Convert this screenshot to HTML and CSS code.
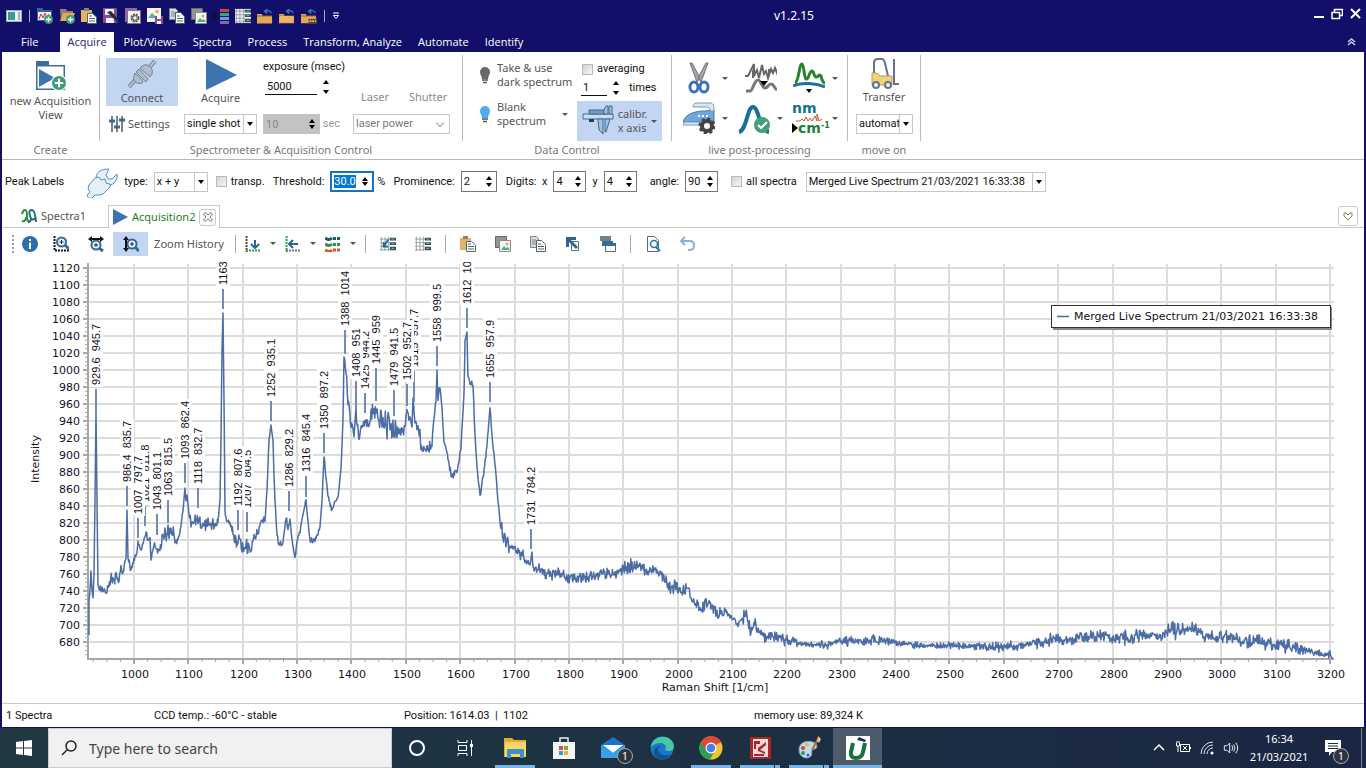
FILE: index.html
```html
<!DOCTYPE html>
<html lang="en">
<head>
  <meta charset="UTF-8" />
  <meta name="viewport" content="width=device-width, initial-scale=1" />
  <title>v1.2.15</title>
  <link rel="stylesheet" href="styles.css">
</head>
<body>

<!-- Shared icons -->
<svg class="defs" aria-hidden="true">
  <symbol id="i-plus" viewBox="0 0 10 10"><circle cx="5" cy="5" r="5" fill="#3f9a78"/><path d="M5 2v6M2 5h6" stroke="#fff" stroke-width="1.500"/></symbol>
  <symbol id="i-paste" viewBox="0 0 16 16"><path d="M0 2h11v12H0z" fill="#e3b365"/><path d="M3 0h5v3H3z" fill="#8a8372"/><path d="M6.500 5.500h5l4 3.500v6.500h-9z" fill="#fff" stroke="#4c6675"/><path d="M8 8h3M8 10.500h6M8 13h6" stroke="#4c6675"/></symbol>
  <symbol id="i-copy" viewBox="0 0 16 16"><path d="M.5.500h6l2 2v9h-8z" fill="#d8dcdf" stroke="#7b868c"/><path d="M2 4h4M2 6h4M2 8h4" stroke="#7b868c"/><path d="M6.500 4.500h5l4 4v7h-9z" fill="#fff" stroke="#51626c"/><path d="M8 8h3M8 10.500h6M8 13h6" stroke="#51626c"/></symbol>
  <symbol id="i-images" viewBox="0 0 16 16"><path d="M.5.500h11v11H.5z" fill="#8e9698" stroke="#65696b"/><path d="M4.500 4.500h11v11h-11z" fill="#f6f6f2" stroke="#8a8a86"/><path d="M6 14l3-4 2 2 2-1 2 3z" fill="#4fae90"/><circle cx="12" cy="8" r="1.500" fill="#eaa35f"/></symbol>
  <symbol id="i-gridset" viewBox="0 0 18 16"><path d="M0 2.500h11M0 6.500h11M0 10.500h11M0 14.500h11M1.500 0v16M5.500 0v16M9.500 0v16" stroke="#9b9b9b"/><path d="M11 1h7v3h-7zM11 6h7v3h-7zM11 11h7v4h-7z" fill="#35505c"/><path d="M13 2.500h3M13 7.500h3M13 13h3" stroke="#7fc0c8"/></symbol>
  <symbol id="i-folderback" viewBox="0 0 17 16"><path d="M0 6h5l1 2h10v8H0z" fill="#e7a856"/><path d="M0 8h16" stroke="#8d6a40"/><path d="M15 5c0-3-4-3-6-2M11 .5L8 3l3 2.500" fill="none" stroke="#3c74ac" stroke-width="1.500"/></symbol>
  <symbol id="i-tri" viewBox="0 0 16 16"><path d="M1 0l15 8L1 16z" fill="#3d74b0"/></symbol>
</svg>

<div class="window">
  <header class="titlebar">
    <div class="quick">
      <button aria-label="Application"><svg viewBox="0 0 16 16"><path d="M.5 2.500h15v11H.5z" fill="#dcebf0" stroke="#9fb6c2"/><path d="M2 4h7v8H2z" fill="#3c9a95"/><path d="M9 4h2v8H9z" fill="#fff"/><path d="M12 4h2v8h-2z" fill="#9eb8cc"/></svg></button>
      <span class="vline"></span>
      <button aria-label="New spectra view"><svg viewBox="0 0 16 16"><path d="M0 0h6v2h9v11H0z" fill="#2c6690"/><path d="M1 4h13v8H1z" fill="#eef"/><path d="M2 11l2-5 2 4 2-5 2 5 2-4" fill="none" stroke="#c33"/><use href="#i-plus" x="7" y="7" width="9" height="9"/></svg></button>
      <button aria-label="Open"><svg viewBox="0 0 16 16"><path d="M1 1h6l1 2h6v3H4l-2 8z" fill="#8c8375"/><path d="M4 5h12l-3 8H1z" fill="#e6a951"/><use href="#i-plus" x="7" y="7" width="9" height="9"/></svg></button>
      <button aria-label="Paste"><svg><use href="#i-paste"/></svg></button>
      <button aria-label="Edit"><svg viewBox="0 0 16 16"><path d="M0 0h13l1 1v14H0z" fill="#80508f"/><path d="M2 1h9v6H2zM3 10h8v5H3z" fill="#f5eff7"/><path d="M4 4l9 9 3 3-1-5-7-8z" fill="#222c42"/></svg></button>
      <button aria-label="Save settings"><svg viewBox="0 0 16 16"><path d="M0 0h12v14H0z" fill="#9069a5"/><path d="M2.500 2.500h13v13h-13z" fill="#f7f3e8" stroke="#8b6c9c"/><circle cx="10" cy="10" r="3.500" fill="none" stroke="#555" stroke-width="2" stroke-dasharray="2 .8"/><circle cx="10" cy="10" r="2.300" fill="none" stroke="#555"/></svg></button>
      <button aria-label="Save image"><svg viewBox="0 0 16 16"><path d="M0 0h14v14H0z" fill="#f4f3ee"/><path d="M1 10l4-5 5 5z" fill="#62af9b"/><circle cx="10" cy="3.500" r="1.800" fill="#eca75b"/><path d="M8 8h8v8H8z" fill="#805090"/><path d="M10 8h4v3h-4zM10 13h4v3h-4z" fill="#fff"/></svg></button>
      <button aria-label="Copy"><svg><use href="#i-copy"/></svg></button>
      <button aria-label="Copy image"><svg><use href="#i-images"/></svg></button>
      <button aria-label="Palette"><svg viewBox="0 0 16 16"><path d="M0 4l5 4-5 4z" fill="#111"/><path d="M7 1h9v3H7z" fill="#c6453b"/><path d="M7 5h9v3H7z" fill="#35a77e"/><path d="M7 9h9v3H7z" fill="#58a8d4"/><path d="M7 13h9v3H7z" fill="#9160a8"/></svg></button>
      <button aria-label="Data grid"><svg viewBox="0 0 18 16"><path d="M0 0h18v16H0z" fill="#edf1f2"/><use href="#i-gridset"/></svg></button>
      <button aria-label="Open previous"><svg><use href="#i-folderback"/></svg></button>
      <button aria-label="Open folder"><svg viewBox="0 0 17 16"><use href="#i-folderback"/><path d="M1 8h14v6H1z" fill="#f0b562"/></svg></button>
      <button aria-label="Open next"><svg viewBox="0 0 17 16"><use href="#i-folderback"/><path d="M8 11h9v5H8z" fill="#5a4a37"/><path d="M9 13.500h7" stroke="#f4bd6c" stroke-width="2" stroke-dasharray="2 1"/></svg></button>
      <span class="vline"></span>
      <button class="more" aria-label="Customize"><svg viewBox="0 0 8 8"><path d="M1 1h6M1.500 3.500h5L4 6.500z" fill="none" stroke="#fff"/></svg></button>
    </div>
    <div class="title">v1.2.15</div>
    <div class="winbtns">
      <button aria-label="Minimize"><svg viewBox="0 0 12 12"><path d="M1 9h10" stroke="#fff" stroke-width="2"/></svg></button>
      <button aria-label="Restore"><svg viewBox="0 0 12 12"><path d="M3.500 4V1.500h8v6H9M1 4.500h7.500v6H1z" fill="none" stroke="#fff" stroke-width="1.500"/></svg></button>
      <button aria-label="Close"><svg viewBox="0 0 12 12"><path d="M2 1l9 9M11 1l-9 9" stroke="#fff" stroke-width="2"/></svg></button>
    </div>
  </header>

  <nav class="menu">
    <a href="#file" class="file">File</a>
    <a href="#acquire" class="active">Acquire</a>
    <a href="#plot">Plot/Views</a>
    <a href="#spectra">Spectra</a>
    <a href="#process">Process</a>
    <a href="#transform">Transform, Analyze</a>
    <a href="#automate">Automate</a>
    <a href="#identify">Identify</a>
    <button class="collapse" aria-label="Collapse ribbon"><svg viewBox="0 0 9 8"><path d="M1 4l3.500-3L8 4M1 7l3.500-3L8 7" fill="none" stroke="#c9c9d8" stroke-width="1.500"/></svg></button>
  </nav>

  <section class="ribbon">
    <div class="group create">
      <button class="big">
        <svg class="ico32" viewBox="0 0 32 32"><path d="M1 1h13v4h16v25H1z" fill="#3c6c9c"/><path d="M2.500 6.500h26v22h-26z" fill="#fff"/><path d="M4 9l16 9-16 9z" fill="#3d74b0"/><circle cx="24" cy="23" r="8" fill="#fff"/><use href="#i-plus" x="17" y="16" width="14" height="14"/></svg>
        <span>new Acquisition<br>View</span>
      </button>
      <h2>Create</h2>
    </div>

    <div class="group spectrometer">
      <div class="acq-grid">
        <button class="big on">
          <svg class="ico32" viewBox="0 0 32 32"><path d="M3 28l6-7M22 10l7-8" stroke="#727f8c" stroke-width="4"/><path d="M3 28l6-7M22 10l7-8" stroke="#b4c3d1" stroke-width="2"/><g fill="#afbecc" stroke="#727f8c"><path d="M8 17c-2 4 3 9 8 7l1-2-8-8z"/><path d="M10 13l10 10 2-3-9-10z"/><path d="M14 9l10 9 2-3c2-5-3-10-8-9z"/></g></svg>
          <span>Connect</span>
        </button>
        <button class="big">
          <svg class="ico32" viewBox="0 0 32 32"><path d="M1 0l31 16-31 15z" fill="#3d74b0"/></svg>
          <span>Acquire</span>
        </button>
        <div class="exposure">
          <label for="exposure">exposure (msec)</label>
          <span class="spin line"><input id="exposure" type="number" value="5000"><i></i></span>
        </div>
        <div class="laser"><span>Laser</span><span>Shutter</span></div>
        <button class="small">
          <svg class="ico16" viewBox="0 0 16 16"><path d="M3 0v16M8 0v16M13 0v16" stroke="#555" stroke-width="1.500"/><path d="M0 5h6M5 11h6M10 4h6" stroke="#376c98" stroke-width="3"/></svg>
          <span>Settings</span>
        </button>
        <span class="drop"><select aria-label="Mode"><option>single shot</option></select></span>
        <div class="secs"><span class="spin disabled"><input id="secs" type="number" value="10" disabled><i></i></span><label for="secs">sec</label></div>
        <span class="drop dim"><select aria-label="Laser power"><option>laser power</option></select></span>
      </div>
      <h2>Spectrometer &amp; Acquisition Control</h2>
    </div>

    <div class="group data">
      <div class="data-cols">
        <div class="bulbs">
          <button class="bulb"><svg viewBox="0 0 12 18"><path d="M6 1a5 5 0 0 1 5 5c0 3-2 4-2 7H3c0-3-2-4-2-7a5 5 0 0 1 5-5z" fill="#686868"/><path d="M3 14h6M4 16.500h4" stroke="#555" stroke-width="1.500"/></svg><span>Take &amp; use<br>dark spectrum</span></button>
          <button class="bulb"><svg viewBox="0 0 12 18"><path d="M6 1a5 5 0 0 1 5 5c0 3-2 4-2 7H3c0-3-2-4-2-7a5 5 0 0 1 5-5z" fill="#54aaf0"/><path d="M3 14h6M4 16.500h4" stroke="#555" stroke-width="1.500"/></svg><span>Blank<br>spectrum</span><i class="arrow"></i></button>
        </div>
        <div class="avg">
          <label class="check"><input type="checkbox"> averaging</label>
          <div class="times"><span class="spin line"><input id="times" type="number" value="1"><i></i></span><label for="times">times</label></div>
          <button class="calibr on">
            <svg viewBox="0 0 32 32"><path d="M1 9h30v5H1z" fill="#c4def6" stroke="#44698f"/><path d="M7 5h17v4H7z" fill="#6e9bca" stroke="#44698f"/><path d="M16 14h5v15l-4-4zM23 14h5l-4 13h-1zM22 5l2-4h2v8h-4zM27 1h3v8h-3z" fill="#9dc2e8" stroke="#44698f"/><path d="M7 14h5v3H7z" fill="#333c4d"/></svg>
            <span>calibr.<br>x axis</span><i class="arrow"></i>
          </button>
        </div>
      </div>
      <h2>Data Control</h2>
    </div>

    <div class="group post">
      <div class="post-grid">
        <button aria-label="Cut"><svg viewBox="0 0 32 32"><path d="M7 1l2 0 8 15-3 4zM25 1l-2 0-8 15 3 4z" fill="#a5a8ac" stroke="#6d7075"/><ellipse cx="11" cy="25" rx="4" ry="5" fill="none" stroke="#3c73b8" stroke-width="3"/><ellipse cx="21" cy="25" rx="4" ry="5" fill="none" stroke="#3c73b8" stroke-width="3"/></svg><i class="arrow"></i></button>
        <button aria-label="Smooth"><svg viewBox="0 0 32 32"><path d="M0 14h3l4-8 2-4v12l3-6 2 8 3-13 2 9 2-3 2 7 3-9 2 4 2-5 2 5 1-4M8 8v8M24 7v7" fill="none" stroke="#666" stroke-width="2"/><path d="M1 29h4c3 0 4-11 8-11 3 0 4 8 7 8s3-4 6-4 3 4 6 6" fill="none" stroke="#777" stroke-width="3"/><path d="M15 19h8l-4 5z" fill="#000"/></svg></button>
        <button aria-label="Baseline"><svg viewBox="0 0 32 32"><path d="M2 21c4-1 4-19 7-19 2 0 2 14 4 15 3 1 3-8 6-8 2 0 2 6 4 6 3 0 3-4 5-1 1 3 1 7 4 7" fill="none" stroke="#23852a" stroke-width="3"/><path d="M0 24c9-4 23-3 32 1" fill="none" stroke="#21719b" stroke-width="3"/><path d="M13 27h6l-3 4z" fill="#000"/></svg><i class="arrow"></i></button>
        <button aria-label="Iron"><svg viewBox="0 0 32 32"><path d="M0 20C2 12 12 9 22 9l9-1v12z" fill="#6ea6df" stroke="#4779b0"/><path d="M2 20h29v3H0zM10 5c0-5 5-4 9-4h8c4 0 4 4 4 8h-4c0-5-3-4-6-4z" fill="#dce7f0" stroke="#7d98b0"/><path d="M15 14h10" stroke="#fff" stroke-width="2" stroke-dasharray="2 2"/><circle cx="24" cy="24" r="5" fill="#fff" stroke="#444" stroke-width="4"/><circle cx="24" cy="24" r="7" fill="none" stroke="#444" stroke-width="3" stroke-dasharray="3 2.500"/></svg><i class="arrow"></i></button>
        <button aria-label="Fit"><svg viewBox="0 0 32 32"><path d="M1 30C9 28 9 5 15 5s6 23 16 25" fill="none" stroke="#186d99" stroke-width="4"/><circle cx="24" cy="23" r="8" fill="#43a07b"/><path d="M20 23l3 3 6-6" fill="none" stroke="#fff" stroke-width="2"/></svg><i class="arrow"></i></button>
        <button class="units" aria-label="Units"><b>nm</b><svg viewBox="0 0 30 8"><path d="M4 7h4l2-2 2 2 2-4 2 4 2-3 2 3 3-5 2 5V0l2 7 3-2" fill="none" stroke="#d0562c"/></svg><strong><em></em>cm<sup>-1</sup></strong><i class="arrow"></i></button>
      </div>
      <h2>live post-processing</h2>
    </div>

    <div class="group move">
      <button class="big">
        <svg class="ico32" viewBox="0 0 32 32"><path d="M6 19V5q0-4 4-4h4q2 0 3 4l3 13M26 1v25h5" fill="none" stroke="#65738b" stroke-width="2"/><path d="M4 15h5l3 3h12v9H4z" fill="#f3d27c" stroke="#bd9954"/><circle cx="8" cy="27" r="3" fill="#f4f4f4" stroke="#65738b" stroke-width="2"/><circle cx="20" cy="27" r="3" fill="#f4f4f4" stroke="#65738b" stroke-width="2"/></svg>
        <span>Transfer</span>
      </button>
      <span class="drop"><select aria-label="Transfer mode"><option>automat</option></select></span>
      <h2>move on</h2>
    </div>
  </section>

  <form class="peakbar">
    <span class="peak-title">Peak Labels</span>
    <svg class="wrench" viewBox="0 0 34 32"><g fill="#e4f0fa" stroke="#5c8cba"><path d="M12 11c1-5 5-8 13-8l-3 6 2 4 4 0 5-5c1 6-3 11-8 11z"/><path d="M5 19l6-7 4-1 2 3 4-1 1 4 4 1v3l-7 7-4 1h-4l-3 3c-3 1-6-1-4-4l2-2-2-3z"/></g></svg>
    <label for="type">type:</label>
    <span class="drop type"><select id="type"><option>x + y</option></select></span>
    <label class="check transp"><input type="checkbox"> transp.</label>
    <label for="threshold">Threshold:</label>
    <span class="spin thr"><input id="threshold" type="number" step="0.1" value="30.0"><i></i></span>
    <span class="pct">%</span>
    <label for="prom">Prominence:</label>
    <span class="spin prom"><input id="prom" type="number" value="2"><i></i></span>
    <label for="dx">Digits:&nbsp; x</label>
    <span class="spin dig"><input id="dx" type="number" value="4"><i></i></span>
    <label for="dy">y</label>
    <span class="spin dig last"><input id="dy" type="number" value="4"><i></i></span>
    <label for="angle">angle:</label>
    <span class="spin dig last"><input id="angle" type="number" value="90"><i></i></span>
    <label class="check"><input type="checkbox"> all spectra</label>
    <span class="drop spectrum"><select aria-label="Spectrum"><option>Merged Live Spectrum 21/03/2021 16:33:38</option></select></span>
  </form>

  <div class="doctabs">
    <a href="#spectra1" class="doc"><svg viewBox="0 0 16 16"><path d="M1 6q1-4 3-4 2 0 2 6t3 6" fill="none" stroke="#2b8a3c" stroke-width="2"/><path d="M1 13q4 1 4-4" fill="none" stroke="#2b8a3c" stroke-width="2"/><path d="M15 14q-1-12-4-12-4 0-2 6t5 2M7 14q3 0 3-4" fill="none" stroke="#1d6e80" stroke-width="2"/></svg>Spectra1</a>
    <a href="#acquisition2" class="doc active"><svg><use href="#i-tri"/></svg>Acquisition2 <span class="close"><svg viewBox="0 0 10 10"><path d="M2 .5L5 3 8 .5 9.500 2 7 5l2.500 3L8 9.500 5 7 2 9.500.5 8 3 5 .5 2z" fill="none" stroke="#777"/></svg></span></a>
    <button class="tablist" aria-label="Tab list"><svg viewBox="0 0 10 10"><path d="M5 9L1 5V2h2l2 2 2-2h2v3z" fill="none" stroke="#8a7f58"/></svg></button>
  </div>

  <main class="panel">
    <div class="tools">
      <span class="grip"></span>
      <button class="info" aria-label="Info"><svg viewBox="0 0 16 16"><circle cx="8" cy="8" r="8" fill="#2f6ca8"/><path d="M8 3v2M8 6.500V13" stroke="#fff" stroke-width="2"/></svg></button>
      <button aria-label="Zoom both"><svg viewBox="0 0 16 16"><path d="M1.500 0v14.500H16" fill="none" stroke="#111" stroke-width="2" stroke-dasharray="2 1"/><circle cx="8.500" cy="6" r="4.500" fill="#e9f2fa" stroke="#34699c" stroke-width="2"/><path d="M12 9l4 4" stroke="#34699c" stroke-width="3"/><path d="M8.500 4v4M6.500 6h4" stroke="#222"/></svg></button>
      <button aria-label="Zoom horizontally"><svg viewBox="0 0 16 16"><circle cx="8" cy="9" r="4.500" fill="#e9f2fa" stroke="#34699c" stroke-width="2"/><path d="M11 12l4 3" stroke="#34699c" stroke-width="3"/><path d="M8 7v4M6 9h4" stroke="#222"/><path d="M0 3l4-3v2h8V0l4 3-4 3V4H4v2z" fill="#111"/></svg></button>
      <button class="on" aria-label="Zoom vertically"><svg viewBox="0 0 16 16"><circle cx="9" cy="8" r="4.500" fill="#e9f2fa" stroke="#34699c" stroke-width="2"/><path d="M12 11l4 4" stroke="#34699c" stroke-width="3"/><path d="M9 6v4M7 8h4" stroke="#222"/><path d="M3 0l3 4H4v8h2l-3 4-3-4h2V4H0z" fill="#111"/></svg></button>
      <button class="text">Zoom History</button>
      <span class="sep"></span>
      <button class="dd" aria-label="Align down"><svg viewBox="0 0 16 16"><path d="M1.500 0v16" stroke="#444" stroke-dasharray="2 1" stroke-width="2"/><path d="M1 14.500h15" stroke="#2ea34b" stroke-width="2" stroke-dasharray="2 1"/><path d="M10 4v8M6 8l4 4 4-4" fill="none" stroke="#286994" stroke-width="2"/></svg><i class="arrow"></i></button>
      <button class="dd" aria-label="Align left"><svg viewBox="0 0 16 16"><path d="M1 14.500h15" stroke="#777" stroke-dasharray="2 1" stroke-width="2"/><path d="M1.500 0v16" stroke="#2ea34b" stroke-width="2" stroke-dasharray="2 1"/><path d="M13 8H4M8 4L4 8l4 4" fill="none" stroke="#286994" stroke-width="2"/></svg><i class="arrow"></i></button>
      <button class="dd" aria-label="Layers"><svg viewBox="0 0 16 16"><path d="M0 2q4 3 7 0" stroke="#1f5d68" stroke-width="3" fill="none"/><path d="M0 8q4 3 7 0" stroke="#2d9151" stroke-width="3" fill="none"/><path d="M0 14q4 3 7 0" stroke="#d4572c" stroke-width="3" fill="none"/><path d="M8 2.500h8" stroke="#1f5d68" stroke-width="3" stroke-dasharray="3 1"/><path d="M8 8.500h8" stroke="#2d9151" stroke-width="3" stroke-dasharray="3 1"/><path d="M8 14h8" stroke="#d4572c" stroke-width="3" stroke-dasharray="3 1"/></svg><i class="arrow"></i></button>
      <span class="sep"></span>
      <button aria-label="Grid import"><svg viewBox="0 0 18 16"><use href="#i-gridset"/><path d="M9 3L5 10M4 6v5h5" fill="none" stroke="#1c6aa0" stroke-width="2"/></svg></button>
      <button aria-label="Grid"><svg><use href="#i-gridset"/></svg></button>
      <span class="sep"></span>
      <button aria-label="Paste"><svg><use href="#i-paste"/></svg></button>
      <button aria-label="Copy image"><svg><use href="#i-images"/></svg></button>
      <button aria-label="Copy"><svg><use href="#i-copy"/></svg></button>
      <button aria-label="Send to"><svg viewBox="0 0 16 16"><path d="M6.500 5.500h7v9h-7z" fill="#fff" stroke="#597083"/><path d="M1 1h10v3H6l7 7-2 2-7-7v5H1z" fill="#2f6391"/></svg></button>
      <button aria-label="Windows"><svg viewBox="0 0 16 16"><path d="M0 0h11v5H0z" fill="#70808c"/><path d="M2 5h11v5H2z" fill="#316a9e"/><path d="M5.500 7.500h10v8h-10z" fill="#fff" stroke="#526c80"/><path d="M5 7h11v3H5z" fill="#316a9e"/></svg></button>
      <span class="sep"></span>
      <button aria-label="Preview"><svg viewBox="0 0 16 16"><path d="M2.500.500h7l4 4v11h-11z" fill="#fff" stroke="#666"/><circle cx="9" cy="8" r="3.500" fill="#eef7fc" stroke="#2878ae" stroke-width="1.500"/><path d="M11 11l4 4" stroke="#2878ae" stroke-width="2"/></svg></button>
      <button aria-label="Undo"><svg viewBox="0 0 16 16"><path d="M2 5h8q4 0 4 4.500t-5 4.500H8M5 1L1 5l4 4" fill="none" stroke="#8bb0dd" stroke-width="2"/></svg></button>
    </div>
    <svg id="chart" class="chart" viewBox="4 258 1358 445" role="img" aria-label="Raman spectrum"></svg>
  </main>

  <footer class="status">
    <span class="s1">1 Spectra</span>
    <span class="s2">CCD temp.: -60°C - stable</span>
    <span class="s3">Position: 1614.03 &nbsp;|&nbsp; 1102</span>
    <span>memory use: 89,324 K</span>
  </footer>
</div>

<div class="taskbar">
  <button class="start" aria-label="Start"><svg viewBox="0 0 16 16"><path d="M0 2l7-1v6.500H0zM8 1l8-1v7.500H8zM0 8.500h7V15l-7-1zM8 8.500h8V16l-8-1z" fill="#fff"/></svg></button>
  <label class="search">
    <svg viewBox="0 0 16 16"><circle cx="10" cy="6" r="5" fill="none" stroke="#222" stroke-width="1.500"/><path d="M6.500 9.500L1 15" stroke="#222" stroke-width="1.500"/></svg>
    <input type="text" placeholder="Type here to search" aria-label="Search">
  </label>
  <button class="task" aria-label="Cortana"><svg viewBox="0 0 24 24"><circle cx="12" cy="12" r="7" fill="none" stroke="#fff" stroke-width="2"/></svg></button>
  <button class="task" aria-label="Task view"><svg viewBox="0 0 24 24"><path d="M4 4v2.500h9V4M4 20v-2.500h9V20M4.500 9.500h8v5h-8zM17.500 4v16" fill="none" stroke="#fff"/><path d="M16 8h3v3h-3z" fill="#fff"/></svg></button>
  <button class="task run" aria-label="File Explorer"><svg viewBox="0 0 24 24"><path d="M1 2h8l2 2h12v17H1z" fill="#e5aa30"/><path d="M2 6h21v15H2z" fill="#fbd667"/><path d="M4 13h17v9h-4v-4H8v4H4z" fill="#3d91ce"/></svg></button>
  <button class="task" aria-label="Store"><svg viewBox="0 0 24 24"><path d="M8 7V2h8v5" fill="none" stroke="#eee" stroke-width="1.500"/><path d="M1 6h22v17H1z" fill="#f5f5f5"/><path d="M7 10h4v4H7z" fill="#e0532c"/><path d="M12 10h4v4h-4z" fill="#78ae32"/><path d="M7 15h4v4H7z" fill="#2e9cdd"/><path d="M12 15h4v4h-4z" fill="#f0b42a"/></svg></button>
  <button class="task" aria-label="Mail"><svg viewBox="0 0 24 24"><path d="M0 9l12-8 12 8v13H0z" fill="#1976c6"/><path d="M2 9h20l-10 8z" fill="#fff"/><path d="M0 9l12 8 12-8v13H0z" fill="#36a1e9"/><path d="M2 9h20l-10 7z" fill="#fff"/></svg><span class="badge">1</span></button>
  <button class="task" aria-label="Edge"><svg viewBox="0 0 24 24"><circle cx="12" cy="12" r="11.500" fill="#1b78c8"/><path d="M1 11C3-3 23-2 24 10c0 5-5 6-9 4 2-4 0-7-5-7-4 0-7 2-9 4z" fill="#47c8a4"/><path d="M8 13c0 5 6 8 13 5-4 7-15 7-17 0-1-5 3-8 7-8-2 1-3 2-3 3z" fill="#14508f"/></svg></button>
  <button class="task run" aria-label="Chrome"><svg viewBox="0 0 24 24"><circle cx="12" cy="12" r="11.500" fill="#f4c331"/><path d="M12 12L2 6a11.500 11.500 0 0 1 20 0z" fill="#dd4937"/><path d="M12 12L2 6a11.500 11.500 0 0 0 9 17.500l5-9z" fill="#2f9e50"/><path d="M12 6.500h10.500L22 6A11.500 11.500 0 0 0 2 6l5 8z" fill="#dd4937"/><circle cx="12" cy="12" r="5.500" fill="#fff"/><circle cx="12" cy="12" r="4.300" fill="#4382ec"/></svg></button>
  <button class="task run two" aria-label="Camera control"><svg viewBox="0 0 24 24"><path d="M2 1h21v22H2z" fill="#a7272a"/><path d="M5 3h15v18H5z" fill="#f3dada"/><path d="M6 5h6v3H8v5H6zM10 12l8-6v3l-6 5 5 2v2l-7-3zM6 18h10v2H6z" fill="#a7272a"/></svg></button>
  <button class="task run two" aria-label="Paint"><svg viewBox="0 0 24 24"><path d="M2 14C2 6 10 4 16 6c5 2 5 7 1 7-4 1-1 4-3 7-3 4-12 2-12-6z" fill="#bfdbee" stroke="#7b9db8"/><circle cx="6" cy="12" r="2" fill="#cf4638"/><circle cx="10" cy="8.500" r="2" fill="#edbb3b"/><circle cx="6" cy="17" r="2" fill="#38965a"/><circle cx="11" cy="19" r="1.500" fill="#4164b8"/><path d="M15 14l6-11" stroke="#b76f2f" stroke-width="2"/><path d="M20 5l1-5 3 3-2 4z" fill="#e7c293"/></svg></button>
  <button class="task run current" aria-label="Spectroscopy"><svg viewBox="0 0 24 24"><path d="M0 0h24v24H0z" fill="#fff"/><path d="M7 7L5 16q-1 6 5 6t7-6l2-9" fill="none" stroke="#15723b" stroke-width="4"/><path d="M13 1l7 3-1 2-8-2z" fill="#1a2a70"/></svg></button>
  <div class="tray">
    <svg viewBox="0 0 16 16"><path d="M3 10l5-5 5 5" fill="none" stroke="#fff" stroke-width="1.500"/></svg>
    <svg viewBox="0 0 16 16"><path d="M1.500 3v3h3V3M2 1v2M4 1v2M3 6v6" fill="none" stroke="#fff"/><path d="M5.500 4.500h9v7h-9zM15.500 7v2M8 6l4 4M12 6l-4 4" fill="none" stroke="#fff"/></svg>
    <svg viewBox="0 0 16 16"><path d="M2 14A12 12 0 0 1 14 2M5 14a9 9 0 0 1 9-9M8 14a6 6 0 0 1 6-6" fill="none" stroke="#dfe5ea"/><circle cx="13" cy="13" r="1.500" fill="#fff"/></svg>
    <svg viewBox="0 0 18 16"><path d="M1.500 5.500h3l3-3v11l-3-3h-3zM10 5q2 3 0 6M12 4q3 4 0 8M14.500 2q4 6 0 12" fill="none" stroke="#fff"/></svg>
    <div class="clock"><div>16:34</div><div>21/03/2021</div></div>
    <button class="notify" aria-label="Notifications"><svg viewBox="0 0 16 16"><path d="M0 0h16v12h-9l-3 4v-4H0z" fill="#fff"/><path d="M3 3.500h10M3 6h10M3 8.500h10" stroke="#1b2844"/></svg><span class="badge">1</span></button>
    <span class="desk"></span>
  </div>
</div>

<script src="chart.js"></script>
</body>
</html>
```
FILE: styles.css
```css
* {
  box-sizing: border-box;
}
html, body {
  height: 100%;
  margin: 0;
}
body {
  display: flex;
  flex-direction: column;
  background: #120f6b;
  font-family: "Noto Sans", "Open Sans", sans-serif;
  font-size: 11px;
  line-height: 14px;
  color: #111;
}
button, input, select {
  font: inherit;
  color: inherit;
  background: none;
  border: 0;
  margin: 0;
  padding: 0;
}
a {
  color: inherit;
  text-decoration: none;
}
svg {
  display: block;
  flex: none;
}
.defs {
  position: absolute;
  width: 0;
  height: 0;
}
.window {
  flex: 1;
  min-height: 0;
  display: flex;
  flex-direction: column;
  padding: 0 2px;
}

/* title bar */
.titlebar {
  display: flex;
  align-items: center;
  height: 32px;
  color: #fff;
}
.quick {
  display: flex;
  align-items: center;
  gap: 6px;
  padding-left: 4px;
}
.quick svg {
  width: 16px;
  height: 16px;
}
.quick .more svg {
  width: 8px;
  height: 8px;
}
.vline {
  width: 1px;
  height: 12px;
  margin: 0 1px;
  background: #a9a9c9;
}
.title {
  flex: 1;
  text-align: center;
  font-size: 12px;
}
.winbtns {
  display: flex;
  justify-content: flex-end;
  gap: 6px;
  width: 116px;
  margin-top: -4px;
  padding-right: 3px;
}
.winbtns svg {
  width: 12px;
  height: 12px;
}

.menu {
  display: flex;
  height: 20px;
  font-family: "Open Sans", "Noto Sans", sans-serif;
  color: #fff;
}
.menu a {
  padding: 3px 8px;
}
.menu .file {
  padding: 3px 22px 3px 19px;
}
.menu .active {
  background: #fff;
  color: #23236b;
  padding: 3px 7px;
  margin-right: 2px;
}
.collapse {
  margin-left: auto;
  padding-right: 8px;
}
.collapse svg {
  width: 9px;
  height: 8px;
}

/* ribbon */
.ribbon {
  display: flex;
  height: 108px;
  padding-top: 3px;
  background: #fff;
  border-bottom: 1px solid #b9b9b9;
  color: #555;
}
.group {
  position: relative;
  height: 86px;
  border-right: 1px solid #bbb;
}
.group h2 {
  position: absolute;
  left: 0;
  right: 0;
  top: 88px;
  margin: 0;
  font-size: 11px;
  font-weight: normal;
  text-align: center;
  color: #777;
}
.create { width: 98px; }
.spectrometer { width: 363px; }
.data { width: 209px; }
.post { width: 176px; }
.move { width: 73px; }
.big {
  display: flex;
  flex-direction: column;
  align-items: center;
  justify-content: center;
  width: 100%;
  height: 48px;
}
.create .big {
  height: 72px;
}
.create .ico32 {
  margin-bottom: 2px;
}
.ico32 {
  width: 32px;
  height: 32px;
}
.ico16 {
  width: 16px;
  height: 16px;
}
.on {
  background: #c2d5f2;
}
.acq-grid {
  display: grid;
  grid-template-columns: 72px 73px 77px 104px;
  grid-template-rows: 48px 20px;
  gap: 8px 6px;
  padding: 3px 0 0 6px;
}
.exposure {
  display: flex;
  flex-direction: column;
  gap: 4px;
  padding-top: 2px;
  color: #111;
  white-space: nowrap;
}
.exposure .spin {
  width: 68px;
  margin-left: 2px;
}
.laser {
  display: flex;
  gap: 20px;
  padding: 32px 0 0 15px;
  color: #888;
}
.small {
  display: flex;
  align-items: center;
  gap: 3px;
  padding-left: 3px;
}
.secs {
  display: flex;
  align-items: center;
  gap: 3px;
  color: #999;
}
.secs .spin {
  width: 57px;
}

/* form controls */
.drop, .spin, .check, .exposure, .times, .secs, .peakbar, .status {
  font-family: Roboto, "Liberation Sans", sans-serif;
}
.drop {
  position: relative;
  display: block;
  height: 20px;
  border: 1px solid #c6c6c6;
  background: #fff;
  color: #111;
}
.drop select {
  appearance: none;
  width: 100%;
  height: 100%;
  padding-left: 2px;
  outline: none;
}
.drop::after {
  content: "";
  position: absolute;
  right: 3px;
  top: 7px;
  border: 3px solid transparent;
  border-top: 4px solid #000;
  border-bottom: 0;
}
.drop::before {
  content: "";
  position: absolute;
  right: 12px;
  top: 0;
  bottom: 0;
  border-left: 1px solid #c6c6c6;
}
.dim {
  color: #777;
  margin-left: 7px;
}
.dim::before {
  display: none;
}
.dim::after {
  width: 5px;
  height: 5px;
  border: 0 solid #999;
  border-width: 0 1px 1px 0;
  transform: rotate(45deg);
  right: 6px;
  top: 5px;
}
.spin {
  position: relative;
  display: block;
  height: 21px;
  border: 1px solid #777;
  background: #fff;
  color: #111;
}
.spin input {
  appearance: textfield;
  width: calc(100% - 12px);
  height: 100%;
  padding-left: 2px;
  outline: none;
}
.spin input::-webkit-inner-spin-button {
  display: none;
}
.spin i::before,
.spin i::after {
  content: "";
  position: absolute;
  right: 4px;
  top: 4px;
  border: 3px solid transparent;
  border-bottom: 4px solid #000;
  border-top: 0;
}
.spin i::after {
  top: auto;
  bottom: 4px;
  border-top: 4px solid #000;
  border-bottom: 0;
}
.spin.line {
  height: 17px;
  border: 0;
}
.spin.line input {
  width: calc(100% - 16px);
  border-bottom: 1px solid #111;
}
.spin.line i::before { top: 2px; }
.spin.line i::after { bottom: 1px; }
.spin.disabled {
  height: 20px;
  background: #c3c3c3;
  border-color: #c3c3c3;
  color: #888;
}
.check {
  display: flex;
  align-items: center;
  gap: 4px;
  color: #111;
}
.check input {
  appearance: none;
  width: 11px;
  height: 11px;
  border: 1px solid #b9b9b9;
  background: linear-gradient(135deg, #d3d3d3, #f5f5f5);
}
.arrow {
  border: 3px solid transparent;
  border-top-color: #555;
  border-bottom: 0;
}

.data-cols {
  display: flex;
  justify-content: space-between;
  padding: 3px 9px 0 16px;
}
.bulbs {
  display: flex;
  flex-direction: column;
  gap: 10px;
  padding-top: 1px;
}
.bulb {
  display: flex;
  align-items: center;
  gap: 6px;
  height: 28px;
  padding-top: 6px;
  text-align: left;
  white-space: nowrap;
}
.bulb:first-child {
  padding-top: 4px;
}
.bulb svg {
  width: 12px;
  height: 18px;
}
.bulb .arrow {
  margin-left: 10px;
}
.avg {
  width: 85px;
}
.avg .check {
  padding: 4px 0 0 5px;
}
.times {
  display: flex;
  align-items: center;
  gap: 6px;
  padding: 3px 0 5px 4px;
  color: #111;
}
.times .spin {
  width: 42px;
}
.calibr {
  display: flex;
  align-items: center;
  justify-content: center;
  gap: 4px;
  width: 85px;
  height: 40px;
  text-align: left;
}
.calibr svg {
  width: 32px;
  height: 32px;
}
.post-grid {
  display: grid;
  grid-template-columns: 55px 55px 55px;
  grid-template-rows: 34px 34px;
  row-gap: 6px;
  padding: 6px 0 0 6px;
}
.post-grid button {
  display: flex;
  align-items: center;
  justify-content: center;
  gap: 7px;
}
.post-grid svg {
  width: 32px;
  height: 32px;
}
.post-grid .units {
  position: relative;
  flex-direction: column;
  align-items: flex-start;
  gap: 0;
  padding-left: 4px;
  font-family: "DejaVu Sans", sans-serif;
  font-size: 14px;
  line-height: 12px;
  color: #16708f;
}
.post-grid .units svg {
  width: 30px;
  height: 8px;
}
.units strong {
  display: flex;
  align-items: center;
  color: #218037;
}
.units em {
  border: 5px solid transparent;
  border-left: 6px solid #000;
  border-right: 0;
}
.units sup {
  font-size: 8px;
  line-height: 8px;
  align-self: flex-start;
}
.units .arrow {
  position: absolute;
  right: 5px;
  top: 16px;
}
.move .big {
  margin-top: 2px;
}
.move .drop {
  width: 57px;
  margin: 9px 0 0 8px;
}

/* peak label bar */
.peakbar {
  display: flex;
  align-items: center;
  gap: 6px;
  height: 45px;
  padding: 0 0 2px 3px;
  background: #fff;
  white-space: nowrap;
}
.wrench {
  width: 34px;
  height: 32px;
  margin-left: 14px;
}
.type { width: 54px; }
.transp { margin: 0 2px; }
.thr {
  width: 44px;
  border: 2px solid #1673bd;
}
.thr input::selection {
  background: #0078d7;
  color: #fff;
}
.pct { margin: 0 2px 0 -3px; }
.prom { width: 36px; margin-right: 3px; }
.dig { width: 33px; }
.last { margin-right: 7px; }
.spectrum { width: 240px; margin-left: 3px; }

.doctabs {
  display: flex;
  align-items: flex-end;
  height: 22px;
  background: #fff;
  color: #555;
}
.doc {
  display: flex;
  align-items: center;
  gap: 4px;
  height: 22px;
  padding: 0 22px 0 19px;
}
.doc > svg {
  width: 16px;
  height: 16px;
}
.doc.active {
  position: relative;
  height: 23px;
  margin-bottom: -1px;
  padding: 0 3px;
  border: 1px solid #c8c8c8;
  border-bottom: 0;
  background: #fff;
  color: #1f7a24;
}
.close, .tablist {
  display: flex;
  align-items: center;
  justify-content: center;
  width: 17px;
  height: 17px;
  border: 1px solid #c8c8c8;
  border-radius: 3px;
}
.tablist {
  width: 20px;
  height: 20px;
  margin: 0 6px 1px auto;
}
.close svg, .tablist svg {
  width: 10px;
  height: 10px;
}

.panel {
  flex: 1;
  min-height: 0;
  display: flex;
  flex-direction: column;
  padding: 0 2px;
  background: #fff;
  border-top: 1px solid #c8c8c8;
  border-bottom: 1px solid #c8c8c8;
}
.tools {
  display: flex;
  align-items: center;
  height: 30px;
  padding: 1px 0 0 8px;
}
.tools button {
  display: flex;
  align-items: center;
  justify-content: center;
  width: 35px;
  height: 24px;
}
.tools svg {
  width: 16px;
  height: 16px;
}
.tools .info {
  width: 30px;
  padding-left: 3px;
}
.tools .text {
  width: 82px;
  color: #555;
}
.tools .dd {
  width: 40px;
  gap: 9px;
}
.grip {
  width: 2px;
  height: 18px;
  margin-right: -1px;
  border-left: 2px dotted #999;
}
.sep {
  width: 1px;
  height: 18px;
  margin: 0 4px 0 5px;
  background: #aaa;
}
.chart {
  flex: 1;
  min-height: 0;
  width: 100%;
}
.chart text {
  font: 11px "DejaVu Sans", sans-serif;
  fill: #16101c;
}
.chart .peak text {
  font: 11px "Liberation Sans", Arial, sans-serif;
  white-space: pre;
}
.grid line { stroke: #dcdcdc; stroke-width: 2; }
.axis line { stroke: #a6a6a2; }
.axis .frame { stroke-width: 2; }
.trace {
  fill: none;
  stroke: #4b6ca4;
  stroke-width: 1.5px;
  stroke-linejoin: round;
}
.peak rect { fill: #fff; }
.peak line { stroke: #6f8bb6; stroke-width: 2; }
.legend-shadow { fill: #888; }
.legend-box { fill: #fff; stroke: #333; }

.status {
  display: flex;
  align-items: center;
  height: 23px;
  padding: 1px 0 0 4px;
  background: #fff;
  white-space: nowrap;
}
.s1 { width: 148px; }
.s2 { width: 250px; }
.s3 { width: 350px; }

/* taskbar */
.taskbar {
  display: flex;
  height: 41px;
  border-top: 1px solid #120f6b;
  background: linear-gradient(90deg, #203842, #1d3142 50%, #1a2643);
  color: #fff;
}
.start {
  display: flex;
  align-items: center;
  justify-content: center;
  width: 48px;
}
.start svg, .search svg {
  width: 16px;
  height: 16px;
}
.search {
  display: flex;
  align-items: center;
  gap: 12px;
  width: 344px;
  padding-left: 12px;
  background: #f1f1f1;
  border: 1px solid #ccc;
}
.search input {
  flex: 1;
  font-size: 14px;
  outline: none;
}
.search input::placeholder {
  color: #444;
}
.task {
  position: relative;
  display: flex;
  align-items: center;
  justify-content: center;
  width: 49px;
}
.task svg {
  width: 24px;
  height: 24px;
}
.run::after {
  content: "";
  position: absolute;
  left: 5px;
  right: 4px;
  bottom: 0;
  height: 3px;
  background: #76b4e8;
}
.two::before {
  content: "";
  position: absolute;
  z-index: 1;
  right: 9px;
  bottom: 0;
  width: 1px;
  height: 3px;
  background: #1d3142;
}
.current {
  background: #4d5b6b;
}
.current::after {
  left: 0;
  right: 0;
}
.badge {
  position: absolute;
  right: 4px;
  bottom: 4px;
  width: 16px;
  height: 16px;
  border: 1px solid #aaa;
  border-radius: 50%;
  background: #2c3440;
  font-size: 11px;
  line-height: 14px;
  text-align: center;
  color: #fff;
}
.tray {
  display: flex;
  align-items: center;
  gap: 8px;
  margin-left: auto;
}
.tray svg {
  width: 16px;
  height: 16px;
}
.clock {
  width: 64px;
  margin-right: 2px;
  text-align: center;
  line-height: 18px;
}
.notify {
  position: relative;
  width: 32px;
  height: 32px;
  padding-left: 4px;
}
.notify .badge {
  right: 4px;
  bottom: 0;
}
.desk {
  width: 5px;
  height: 40px;
  border-left: 1px solid #7b8494;
}
```
FILE: chart.js
```js
const NS = "http://www.w3.org/2000/svg";
const chart = document.getElementById("chart");

const px = shift => 134 + (shift - 1000) * 0.54364;
const py = value => 268 + (1120 - value) * 0.85;

function add(parent, tag, attrs, text) {
  const el = document.createElementNS(NS, tag);
  for (const k in attrs) el.setAttribute(k, attrs[k]);
  if (text !== undefined) el.textContent = text;
  parent.appendChild(el);
  return el;
}
function line(parent, x1, y1, x2, y2, cls) {
  return add(parent, "line", { x1, y1, x2, y2, class: cls || "" });
}

// grid, ticks and axis numbers
const grid = add(chart, "g", { class: "grid" });
const axis = add(chart, "g", { class: "axis" });
for (let v = 680; v <= 1120; v += 20) {
  line(grid, 88, py(v), 1334, py(v));
  line(axis, 83, py(v), 88, py(v), "frame");
  add(chart, "text", { x: 80, y: py(v) + 4, "text-anchor": "end" }, v);
}
for (let v = 665; v <= 1120; v += 5) line(axis, 85, py(v), 88, py(v));
for (let v = 1000; v <= 3200; v += 100) {
  const x = Math.round(px(v));
  line(grid, x, 264, x, 659);
  line(axis, x, 659, x, 664, "frame");
  add(chart, "text", { x: x + 1, y: 678, "text-anchor": "middle" }, v);
}
for (let v = 925; v <= 3200; v += 25) line(axis, px(v), 659, px(v), 662);
line(axis, 88, 263, 88, 660, "frame");
line(axis, 87, 659, 1334, 659, "frame");
add(chart, "text", { x: 715, y: 691, "text-anchor": "middle" }, "Raman Shift [1/cm]");
add(chart, "text", { transform: "translate(39 459) rotate(-90)", "text-anchor": "middle" }, "Intensity");

// spectrum outline: x, y, noise height
const points = [
  [89,635,0],[89,600,0],[90,590,1],[91,571,0],[92,590,0],[93,598,0],[94,575,0],[95,500,0],[96,412,0],[97,500,0],
  [98,585,0],[99,589,2],[102,592,3],[107,592,3],[110,580,3],[116,578,4],[119,580,4],[121,568,3],[123,575,2],
  [125,562,1],[126,558,0],[127,510,0],[128,558,0],[131,570,2],[135,558,2],[137,553,1],[138,541,0],[140,550,2],
  [143,544,2],[146,532,1],[148,540,2],[150,538,1],[151,560,0],[154,545,2],[157,551,3],[161,545,3],[165,535,4],
  [168,532,5],[172,534,5],[178,538,5],[181,524,2],[183,510,1],[185,488,0],[186,502,2],[187,495,0],[189,515,2],
  [191,522,3],[198,519,4],[203,525,4],[208,524,4],[214,524,4],[218,522,2],[220,500,0],[221,440,0],[222,350,0],
  [223,313,0],[224,400,0],[225,510,1],[226,518,2],[229,523,2],[233,533,3],[237,542,4],[240,540,4],[242,550,3],
  [245,545,4],[249,548,5],[251,550,2],[254,537,3],[258,533,3],[262,520,2],[265,520,2],[267,490,1],[269,440,1],
  [271,425,0],[273,440,1],[274,475,1],[275,500,0],[277,535,1],[280,543,3],[283,541,3],[286,518,1],[288,527,3],
  [290,520,1],[292,540,1],[295,558,1],[297,542,2],[300,530,2],[302,520,2],[306,500,1],[307,512,1],[309,532,1],
  [311,542,2],[315,540,3],[318,532,2],[320,527,1],[322,500,1],[324,457,0],[326,478,2],[328,493,3],[332,510,2],
  [335,502,2],[338,497,1],[341,470,1],[343,420,1],[344,357,0],[346,370,4],[348,400,5],[351,425,3],[354,431,4],
  [356,412,3],[359,438,3],[362,425,4],[365,420,4],[368,425,4],[373,413,6],[376,409,5],[379,422,5],[383,421,8],
  [390,430,9],[397,428,9],[403,437,5],[406,418,3],[407,410,1],[410,423,4],[412,426,3],[413,398,0],[415,418,3],
  [420,435,4],[421,450,1],[425,448,3],[432,446,4],[433,428,2],[436,400,2],[437,370,0],[438,398,4],[440,390,8],
  [442,410,3],[444,441,2],[448,458,2],[452,479,3],[455,470,2],[457,472,1],[461,448,2],[464,395,2],[465,341,3],
  [467,332,0],[468,375,3],[470,381,3],[473,385,2],[475,435,2],[477,468,1],[480,494,2],[483,478,2],[487,445,2],
  [490,407,1],[492,435,4],[494,455,2],[496,475,2],[498,500,2],[500,522,2],[503,538,5],[510,545,6],[515,548,3],
  [523,557,4],[530,566,2],[532,552,0],[533,568,2],[539,568,3],[543,573,4],[557,572,4],[563,577,4],[580,577,4],
  [593,577,3],[603,572,4],[613,573,4],[623,570,4],[635,567,5],[647,571,4],[657,571,4],[665,578,4],[668,587,4],
  [677,587,4],[683,593,4],[687,587,4],[693,600,3],[703,607,4],[708,602,4],[717,613,4],[727,613,4],[733,620,4],
  [738,627,5],[742,618,4],[747,616,6],[751,633,4],[754,623,3],[763,635,4],[773,635,4],[787,640,4],[797,643,3],
  [827,645,2],[847,641,3],[880,640,3],[900,643,2],[913,645,2],[940,646,2],[950,645,2],[977,647,2],[1000,647,3],
  [1030,644,3],[1058,639,4],[1073,641,3],[1083,637,4],[1120,638,4],[1143,634,5],[1160,636,3],[1170,631,4],
  [1185,628,5],[1197,631,4],[1210,638,4],[1230,636,4],[1242,642,4],[1257,639,4],[1270,645,4],[1290,646,4],
  [1303,650,3],[1323,654,2],[1330,655,3],[1333,659,0]
];

let seed = 17;
function rand() {
  seed = (seed * 16807) % 2147483647;
  return seed / 2147483647;
}

let d = "M89 635";
for (let i = 1; i < points.length; i++) {
  const [x0, y0] = points[i - 1];
  const [x1, y1, n] = points[i];
  const steps = Math.max(1, Math.round((x1 - x0) / 0.6));
  for (let s = 1; s <= steps; s++) {
    const t = s / steps;
    const noise = (rand() + rand() - 1) * n * 2;
    d += `L${(x0 + (x1 - x0) * t).toFixed(1)} ${(y0 + (y1 - y0) * t + noise).toFixed(1)}`;
  }
}
add(chart, "path", { class: "trace", d });

// peak labels: shift, intensity, extra lift of the label
const peaks = [
  ["929.6", "945.7", 3], ["986.4", "835.7", 0], ["1007", "797.7", 0], ["1021", "811.8", 0], ["1043", "801.1", 1],
  ["1063", "815.5", 3], ["1093", "862.4", 0], ["1118", "832.7", 0], ["1163", "1067", 0], ["1192", "807.6", 0],
  ["1207", "804.5", 0], ["1252", "935.1", 0], ["1286", "829.2", 0], ["1316", "845.4", 1], ["1350", "897.2", 0],
  ["1388", "1014", 4], ["1408", "951", 7], ["1425", "944.2", 0], ["1445", "959", 13], ["1479", "941.5", 6],
  ["1502", "952.7", 2], ["1515", "957.7", 11], ["1558", "999.5", 0], ["1612", "1045", 0], ["1655", "957.9", 0],
  ["1731", "784.2", 0]
];
const clip = add(add(chart, "defs", {}), "clipPath", { id: "plot" });
add(clip, "rect", { x: 88, y: 262, width: 1246, height: 398 });
const layer = add(chart, "g", { class: "peak", "clip-path": "url(#plot)" });
peaks.reverse().forEach(([shift, value, lift]) => {
  const x = Math.round(px(+shift));
  const y = Math.round(py(+value)) - 28 - lift;
  const bg = add(layer, "rect", { x: x - 7, width: 14 });
  const text = add(layer, "text", { transform: `translate(${x + 4} ${y}) rotate(-90)` }, `${shift}  ${value}`);
  const w = text.getComputedTextLength() + 4;
  bg.setAttribute("y", y + 2 - w);
  bg.setAttribute("height", w);
  line(layer, x, y + 4, x, y + 24 + lift);
});

// legend
add(chart, "rect", { class: "legend-shadow", x: 1053, y: 307, width: 279, height: 23 });
add(chart, "rect", { class: "legend-box", x: 1051.5, y: 305.5, width: 279, height: 22 });
add(chart, "path", { class: "trace", d: "M1057 316.5h12" });
add(chart, "text", { x: 1074, y: 320 }, "Merged Live Spectrum 21/03/2021 16:33:38");

const threshold = document.getElementById("threshold");
threshold.focus();
threshold.select();
```
